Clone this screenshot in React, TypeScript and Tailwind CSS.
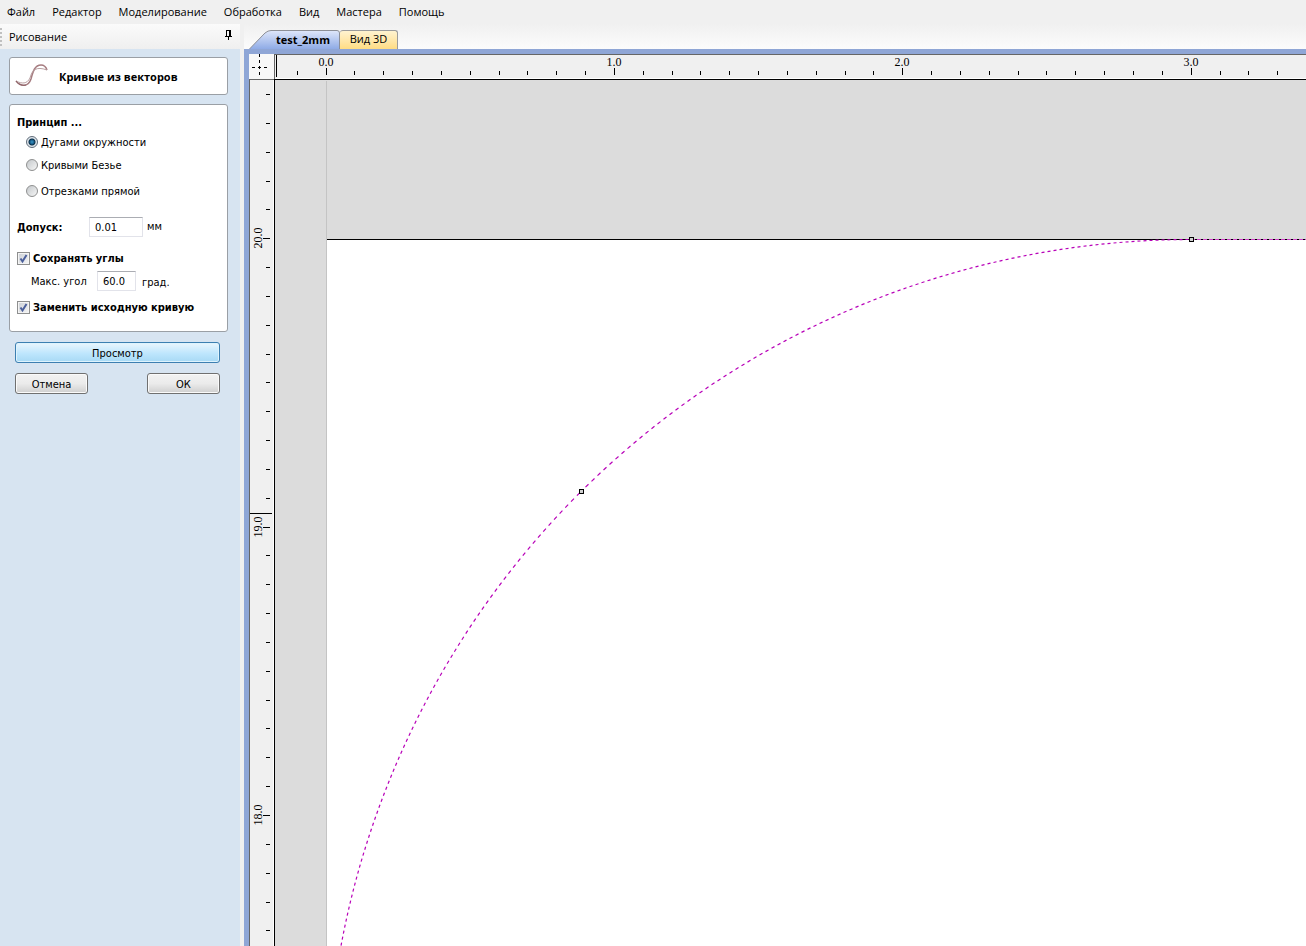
import React, { useLayoutEffect, useRef, useState } from 'react';

// Pixels per millimetre and where the origin sits inside the canvas
const SCALE = 288.4;
const ORIGIN_X = 51;
const TOP_MM = 20;
const TOP_Y = 159;

const MENU_ITEMS = ['Файл', 'Редактор', 'Моделирование', 'Обработка', 'Вид', 'Мастера', 'Помощь'];

const PRINCIPLES = [
  { id: 'arcs', label: 'Дугами окружности', row: 'h-[22px]' },
  { id: 'bezier', label: 'Кривыми Безье', row: 'h-6' },
  { id: 'lines', label: 'Отрезками прямой', row: 'h-7' },
];

const MenuBar: React.FC = () => (
  <nav className="flex h-6 shrink-0 items-center gap-[17px] bg-[#f0f0f0] px-[7px] font-['Open_Sans',sans-serif] text-[11px]">
    {MENU_ITEMS.map((item) => (
      <button key={item} type="button" className="whitespace-nowrap">
        {item}
      </button>
    ))}
  </nav>
);

interface CheckFieldProps {
  label: string;
  checked: boolean;
  onChange: (value: boolean) => void;
}

const CheckField: React.FC<CheckFieldProps> = ({ label, checked, onChange }) => (
  <label className="flex h-[18px] items-center gap-[3px] font-bold whitespace-nowrap">
    <span className="grid size-[13px] shrink-0">
      <input
        type="checkbox"
        checked={checked}
        onChange={(e) => onChange(e.target.checked)}
        className="peer col-start-1 row-start-1 size-[13px] appearance-none border border-[#8e8f8f] bg-linear-to-br from-[#cbcfd5] to-[#f6f6f6] shadow-[inset_0_0_0_1px_#f4f4f4]"
      />
      <svg viewBox="0 0 13 13" className="pointer-events-none invisible col-start-1 row-start-1 size-[13px] peer-checked:visible">
        <path d="M3.5 6.5 L5.5 9.5 L9.5 3" fill="none" stroke="#4b5f9b" strokeWidth="2" />
      </svg>
    </span>
    <span className="pt-0.5">{label}</span>
  </label>
);

const ToolPanel: React.FC = () => {
  const [principle, setPrinciple] = useState('arcs');
  const [tolerance, setTolerance] = useState('0.01');
  const [keepCorners, setKeepCorners] = useState(true);
  const [maxAngle, setMaxAngle] = useState('60.0');
  const [replaceSource, setReplaceSource] = useState(true);

  const boxClass = 'rounded-[3px] border border-[#9a9fa5] bg-white';
  const inputClass =
    'h-5 border border-[#e2e3ea] border-t-[#abadb3] bg-white px-[5px] text-[11px] outline-none';
  const buttonClass =
    'h-[21px] w-[73px] rounded-[3px] border border-[#707070] bg-linear-to-b from-[#f2f2f2] from-0% via-[#ebebeb] via-50% to-[#cfcfcf] pt-0.5 text-center shadow-[inset_0_0_0_1px_#fafafa]';

  return (
    <aside className="flex w-[240px] shrink-0 flex-col bg-[#d7e4f1] font-['DejaVu_Sans_Condensed','DejaVu_Sans',sans-serif] text-[11px] leading-[14px]">
      <header className="flex h-[25px] items-center bg-linear-to-b from-[#fbfbfb] to-[#efefef] font-['Open_Sans',sans-serif] text-[11px]">
        <span className="h-[18px] w-[2px] border-l-2 border-dotted border-[#c0c0c0]" />
        <h2 className="ml-[7px] flex-1">Рисование</h2>
        <button type="button" aria-label="Закрепить" className="mr-2 mb-1">
          <svg width="7" height="10" viewBox="0 0 7 10" shapeRendering="crispEdges">
            <path d="M1 0H6V6H7V7H4V10H3V7H0V6H1Z M2 1V6H4V1Z" fill="#000" fillRule="evenodd" />
          </svg>
        </button>
      </header>

      <div className="flex flex-col pt-2 pr-3 pl-[9px]">
        <div className={`${boxClass} flex h-[38px] items-center pl-[5px]`}>
          <svg width="33" height="24" viewBox="0 0 33 24" fill="none">
            <path d="M1 17 C5 22 13 24 16 15 C18 7 20 1 26 1 C29 1 31 3 32 6" stroke="#a67c80" strokeWidth="1.5" />
            <path d="M1 17 C7 20 12 20 15 14 C17 6 21 2 32 6" stroke="#b9a0a2" strokeWidth="1" />
            <path d="M1 17 C4 21 8 22 11 21" stroke="#8a5f64" strokeWidth="1" />
          </svg>
          <h3 className="ml-[11px] pt-0.5 font-['Open_Sans',sans-serif] text-[11px] font-bold whitespace-nowrap">
            Кривые из векторов
          </h3>
        </div>

        <div className={`${boxClass} mt-[9px] px-[7px] pt-2 pb-[15px]`}>
          <fieldset>
            <legend className="flex h-[18px] items-center pt-0.5 font-bold">Принцип ...</legend>
            {PRINCIPLES.map(({ id, label, row }) => (
              <label key={id} className={`${row} flex items-center gap-[3px] pl-[9px] whitespace-nowrap`}>
                <input
                  type="radio"
                  name="principle"
                  value={id}
                  checked={principle === id}
                  onChange={() => setPrinciple(id)}
                  className="size-3 shrink-0 appearance-none rounded-full border border-[#8e8f8f] bg-linear-to-br from-[#c4c8cb] to-[#f6f6f6] checked:border-[#5f6b78] checked:bg-[radial-gradient(circle_at_50%_50%,#3a9aca_0,#175b88_2px,#0d3048_3px,#dfe6ec_4px)]"
                />
                <span className="pt-0.5">{label}</span>
              </label>
            ))}
          </fieldset>

          <div className="mt-3 flex items-center">
            <label htmlFor="tolerance" className="w-[72px] pt-0.5 font-bold">
              Допуск:
            </label>
            <input
              id="tolerance"
              type="text"
              value={tolerance}
              onChange={(e) => setTolerance(e.target.value)}
              className={`${inputClass} w-[54px]`}
            />
            <span className="ml-1">мм</span>
          </div>

          <div className="mt-3">
            <CheckField label="Сохранять углы" checked={keepCorners} onChange={setKeepCorners} />
          </div>
          <div className="mt-1 flex items-center pl-[14px]">
            <label htmlFor="max-angle" className="w-[66px] pt-0.5 whitespace-nowrap">
              Макс. угол
            </label>
            <input
              id="max-angle"
              type="text"
              value={maxAngle}
              onChange={(e) => setMaxAngle(e.target.value)}
              className={`${inputClass} w-[39px]`}
            />
            <span className="ml-[6px] pt-1">град.</span>
          </div>
          <div className="mt-[7px]">
            <CheckField label="Заменить исходную кривую" checked={replaceSource} onChange={setReplaceSource} />
          </div>
        </div>

        <div className="mt-[10px] flex flex-col gap-[10px] pr-2 pl-[6px]">
          <button
            type="button"
            className="h-[21px] rounded-[3px] border border-[#3c7fb1] bg-linear-to-b from-[#eaf6fd] from-0% via-[#bee6fd] via-55% to-[#a7d9f5] pt-0.5 text-center shadow-[inset_0_0_0_1px_#def3fd]"
          >
            Просмотр
          </button>
          <div className="flex justify-between">
            <button type="button" className={buttonClass}>
              Отмена
            </button>
            <button type="button" className={buttonClass}>
              ОК
            </button>
          </div>
        </div>
      </div>
    </aside>
  );
};

const ViewTabs: React.FC = () => (
  <div className="flex h-[25px] shrink-0 items-end bg-linear-to-b from-[#f0f0f0] to-[#fcfcfc] pl-[5px] font-['Open_Sans',sans-serif] text-[11px]">
    <button type="button" className="relative h-[19px] w-[91px] pl-[17px] leading-[18px] font-bold">
      <svg className="absolute inset-0" width="91" height="19" viewBox="0 0 91 19">
        <defs>
          <linearGradient id="active-tab" x1="0" y1="0" x2="0" y2="1">
            <stop offset="0" stopColor="#dfe7fa" />
            <stop offset="1" stopColor="#8fabe6" />
          </linearGradient>
        </defs>
        <path d="M0.5 19 L16 3 Q19 0.5 22 0.5 H88 Q90.5 0.5 90.5 3 V19" fill="url(#active-tab)" stroke="#8d8f96" />
      </svg>
      <span className="relative">test_2mm</span>
    </button>
    <button
      type="button"
      className="h-[19px] w-[58px] rounded-t-[3px] border border-b-0 border-l-0 border-[#9b9b9b] bg-linear-to-b from-[#fff3d0] to-[#ffdc83] pb-0.5 leading-4 whitespace-nowrap"
    >
      Вид 3D
    </button>
  </div>
);

// Tracks the drawn size of a ruler so that only the visible ticks are created
const useSize = () => {
  const ref = useRef<SVGSVGElement>(null);
  const [size, setSize] = useState({ width: 0, height: 0 });

  useLayoutEffect(() => {
    const node = ref.current;
    if (!node) return;
    const update = () => {
      const { width, height } = node.getBoundingClientRect();
      setSize({ width, height });
    };
    update();
    const observer = new ResizeObserver(update);
    observer.observe(node);
    return () => observer.disconnect();
  }, []);

  return { ref, size };
};

const getTicks = (origin: number, length: number) => {
  const step = SCALE / 10;
  const first = Math.ceil((4 - origin) / step);
  const count = Math.max(0, Math.floor((length - origin) / step) - first + 1);
  return Array.from({ length: count }, (_, i) => {
    const tick = first + i;
    const pos = Math.floor(origin + tick * step);
    const major = tick % 10 === 0;
    return { tick, pos, major, labelled: major && pos > 12 && pos < length - 12 };
  });
};

const RulerCorner: React.FC = () => (
  <svg width="25" height="25" className="block bg-[#f8f8f8]" shapeRendering="crispEdges">
    <path d="M10.5 0 V22" stroke="#000" strokeDasharray="3 3" />
    <path d="M3 13.5 H20" stroke="#000" strokeDasharray="3 3" />
  </svg>
);

const HorizontalRuler: React.FC = () => {
  const { ref, size } = useSize();
  return (
    <svg
      ref={ref}
      width="100%"
      height="25"
      className="block border-t border-l border-[#666] bg-[#f0f0f0]"
      fontFamily="'Liberation Serif', serif"
      fontSize="12"
      textAnchor="middle"
    >
      <rect x="1" y="0" width="1" height="22" />
      {getTicks(ORIGIN_X, size.width).map(({ tick, pos, major, labelled }) => (
        <g key={tick}>
          <rect x={pos} y={major ? 13 : 16} width="1" height={major ? 7 : 4} />
          {labelled && (
            <text x={pos} y="11">
              {(tick / 10).toFixed(1)}
            </text>
          )}
        </g>
      ))}
      <rect x="0" y="23" width="100%" height="1" fill="#fff" />
    </svg>
  );
};

const VerticalRuler: React.FC = () => {
  const { ref, size } = useSize();
  return (
    <svg
      ref={ref}
      width="25"
      height="100%"
      className="block border-t border-l border-[#666] bg-[#f0f0f0]"
      fontFamily="'Liberation Serif', serif"
      fontSize="12"
      textAnchor="middle"
    >
      {getTicks(TOP_Y - 0.3, size.height).map(({ tick, pos, major, labelled }) => (
        <g key={tick}>
          <rect x={major ? 13 : 16} y={pos} width={major ? 7 : 4} height="1" />
          {labelled && (
            <text transform={`translate(12 ${pos}) rotate(-90)`}>{(TOP_MM - tick / 10).toFixed(1)}</text>
          )}
        </g>
      ))}
      <rect x="0" y="433" width="22" height="1" />
      <rect x="23" y="0" width="1" height="100%" fill="#fff" />
    </svg>
  );
};

const Handle: React.FC<{ x: number; y: number }> = ({ x, y }) => (
  <rect x={x - 2} y={y - 2} width="4" height="4" fill="#d0d0d0" stroke="#000" />
);

// Quarter arc as separate dashes, spaced evenly along whichever axis the curve follows most
const arcDashes = (cx: number, cy: number, r: number) => {
  const half = r * Math.SQRT1_2;
  const side = (d: number) => Math.sqrt(r * r - d * d);
  const parts: string[] = [];
  for (let d = 3; d < half; d += 6) {
    const e = d + 3;
    parts.push(`M${cx - d} ${cy - side(d)}L${cx - e} ${cy - side(e)}`);
    parts.push(`M${cx - side(d)} ${cy - d}L${cx - side(e)} ${cy - e}`);
  }
  return parts.join('');
};

const Canvas: React.FC = () => {
  const r = 3 * SCALE;
  const endX = Math.floor(ORIGIN_X + r) + 0.5;
  const y = TOP_Y + 0.5;

  return (
    <svg width="100%" height="100%" className="block border-t border-l border-black bg-[#dcdcdc]">
      <g shapeRendering="crispEdges">
        <rect x={ORIGIN_X + 1} y={TOP_Y} width="100%" height="100%" fill="#fff" />
        <rect x={ORIGIN_X} y="1" width="1" height="100%" fill="#c4c4c4" />
        <rect x={ORIGIN_X + 1} y={TOP_Y} width="100%" height="1" fill="#000" />
      </g>
      <path d={arcDashes(endX, y + r, r)} fill="none" stroke="#b800b8" strokeWidth="1.2" />
      <line x1={endX - 0.5} y1={y} x2="100%" y2={y} stroke="#d040c8" strokeDasharray="4 2" />
      <Handle x={endX} y={y} />
      <Handle x={306.5} y={411.5} />
    </svg>
  );
};

const Workspace: React.FC = () => (
  <main className="ml-1 flex min-w-0 flex-1 flex-col">
    <ViewTabs />
    <div className="grid min-h-0 flex-1 grid-cols-[25px_minmax(0,1fr)] grid-rows-[25px_minmax(0,1fr)] overflow-hidden border-t-[5px] border-l-[5px] border-[#8fa6d6]">
      <RulerCorner />
      <HorizontalRuler />
      <VerticalRuler />
      <Canvas />
    </div>
  </main>
);

const App: React.FC = () => (
  <div className="flex h-screen flex-col overflow-hidden bg-[#f0f0f0] text-black">
    <MenuBar />
    <div className="flex min-h-0 flex-1">
      <ToolPanel />
      <Workspace />
    </div>
  </div>
);

export default App;
